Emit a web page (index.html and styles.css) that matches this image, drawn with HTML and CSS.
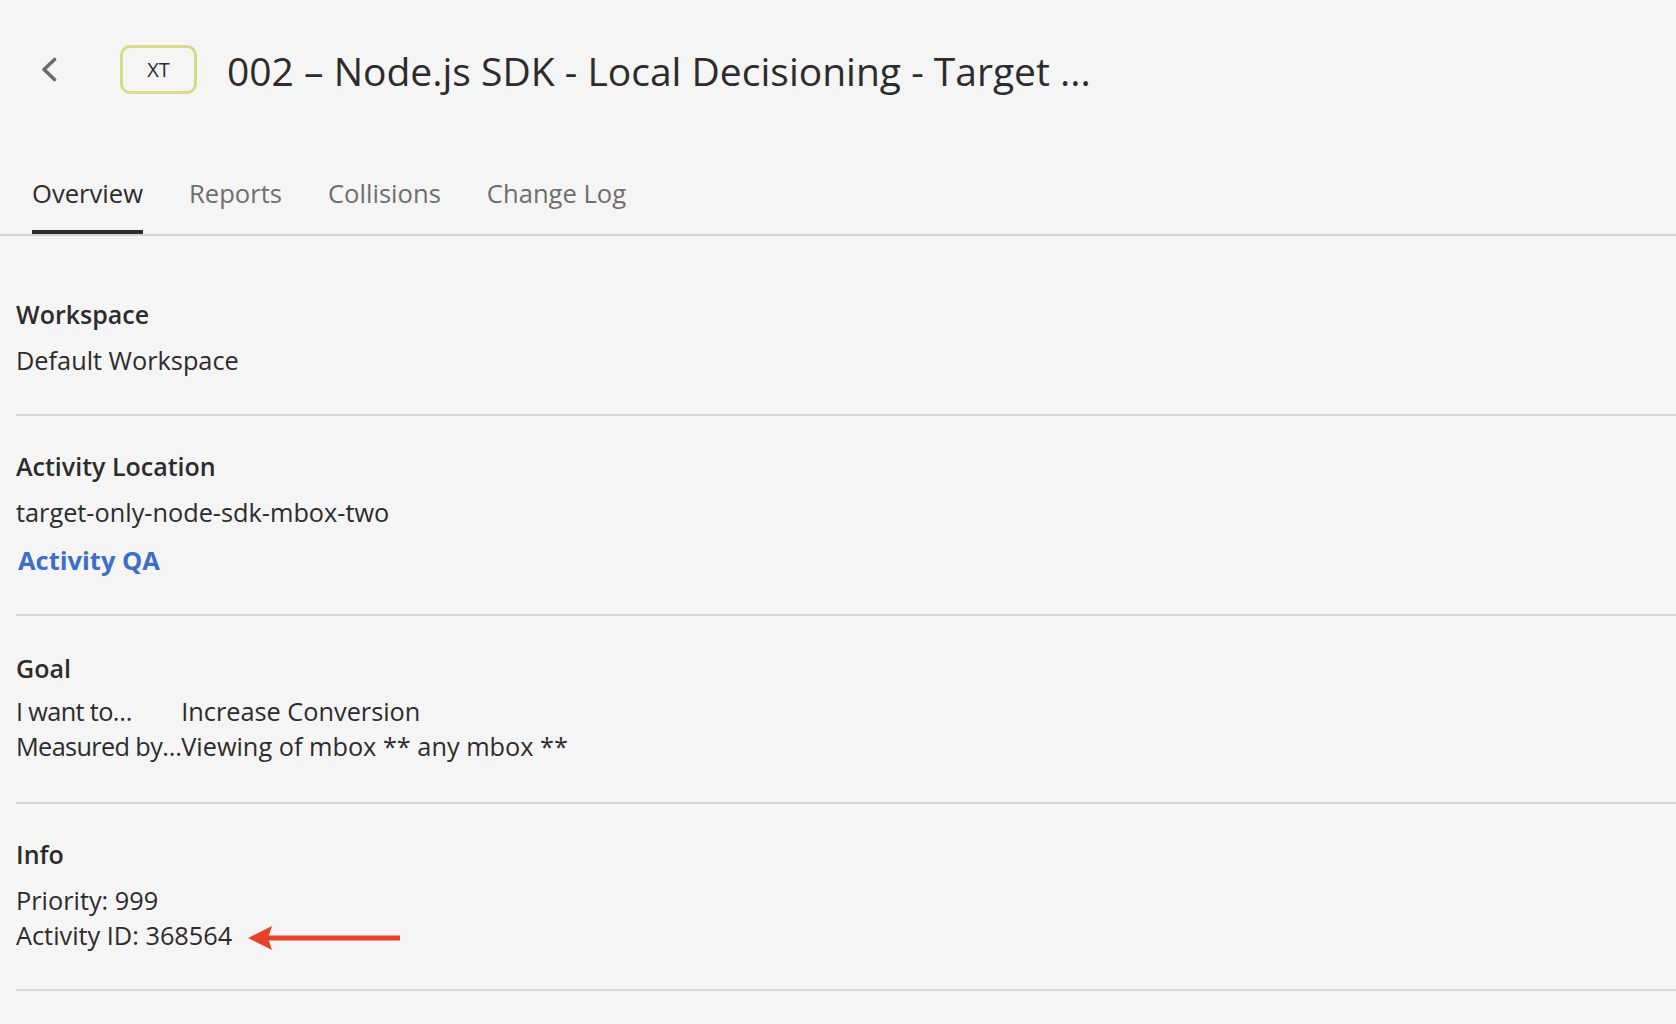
FILE: index.html
```html
<!DOCTYPE html>
<html lang="en">
<head>
<meta charset="utf-8">
<title>002 – Node.js SDK - Local Decisioning - Target</title>
<link rel="stylesheet" href="styles.css">
</head>
<body>
<header class="page-header">
  <button class="back" aria-label="Back">
    <svg width="16" height="25" viewBox="0 0 16 25" aria-hidden="true">
      <path d="M13.5 2.5 L3 12.5 L13.5 22.5" fill="none" stroke="#6b6b6b" stroke-width="3.6" stroke-linecap="round" stroke-linejoin="round"/>
    </svg>
  </button>
  <span class="badge">XT</span>
  <h1 class="title">002 – Node.js SDK - Local Decisioning - Target ...</h1>
</header>

<nav class="tabs">
  <a class="tab active">Overview</a>
  <a class="tab">Reports</a>
  <a class="tab">Collisions</a>
  <a class="tab">Change Log</a>
</nav>

<main class="sections">
  <section class="section">
    <h2 class="section-title">Workspace</h2>
    <div class="line">Default Workspace</div>
  </section>

  <section class="section">
    <h2 class="section-title">Activity Location</h2>
    <div class="line">target-only-node-sdk-mbox-two</div>
    <a class="link">Activity QA</a>
  </section>

  <section class="section section-goal">
    <h2 class="section-title">Goal</h2>
    <div class="goal-grid">
      <span class="line goal-label">I want to…</span><span class="line">Increase Conversion</span>
      <span class="line goal-label">Measured by…</span><span class="line">Viewing of mbox ** any mbox **</span>
    </div>
  </section>

  <section class="section">
    <h2 class="section-title">Info</h2>
    <div class="line">Priority: 999</div>
    <div class="line">Activity ID: 368564<svg class="arrow" width="152" height="24" viewBox="0 0 152 24" aria-hidden="true">
        <polygon points="0,12 24,0 20,12 24,24" fill="#e8412a"/>
        <rect x="20" y="9.5" width="132" height="5" fill="#e8412a"/>
      </svg></div>
  </section>
</main>
</body>
</html>
```

FILE: styles.css
```css
* { box-sizing: border-box; }

html, body {
  margin: 0;
  background: #f5f5f5;
}

body {
  font-family: "Open Sans", "Liberation Sans", sans-serif;
  color: #2c2c2c;
  width: 1676px;
  min-height: 1024px;
  overflow: hidden;
}

.page-header {
  display: flex;
  align-items: center;
  padding: 45px 0 0 41px;
}

.back {
  display: flex;
  align-items: center;
  padding: 0;
  border: 0;
  background: none;
  width: 16px;
  height: 25px;
}

.badge {
  display: flex;
  align-items: center;
  justify-content: center;
  width: 77px;
  height: 49px;
  margin-left: 63px;
  border: 3px solid #d8db85;
  border-radius: 10px;
  font-size: 20px;
  line-height: 1;
  color: #2c2c2c;
}

.title {
  margin: 0 0 0 30px;
  font-size: 39px;
  line-height: 49px;
  font-weight: 400;
  white-space: nowrap;
  position: relative;
  top: 1px;
}

.tabs {
  display: flex;
  gap: 46px;
  margin-top: 83px;
  padding-left: 32px;
  border-bottom: 2px solid #d4d4d4;
}

.tab {
  font-size: 25.6px;
  line-height: 34px;
  padding-bottom: 19px;
  border-bottom: 4px solid transparent;
  color: #6e6e6e;
}

.tab.active {
  color: #2c2c2c;
  border-bottom-color: #2c2c2c;
}

.sections {
  padding: 28px 0 0 16px;
}

.section {
  padding: 33px 0 36px;
  border-bottom: 2px solid #d6d6d6;
}

.section-goal {
  padding-top: 35px;
  padding-bottom: 38px;
}

.section-goal .section-title {
  margin-bottom: 8px;
}

.section-title {
  margin: 0 0 11px;
  font-size: 25px;
  line-height: 35px;
  font-weight: 600;
}

.line {
  font-size: 25.3px;
  line-height: 35px;
}

.link {
  display: block;
  margin: 13px 0 0 2px;
  font-size: 25.5px;
  line-height: 35px;
  font-weight: 700;
  color: #3b6fc8;
}

.goal-grid {
  display: grid;
  grid-template-columns: max-content 1fr;
}

.goal-label {
  letter-spacing: -0.65px;
}

.arrow {
  display: inline-block;
  vertical-align: -5px;
  margin-left: 16px;
}
```
